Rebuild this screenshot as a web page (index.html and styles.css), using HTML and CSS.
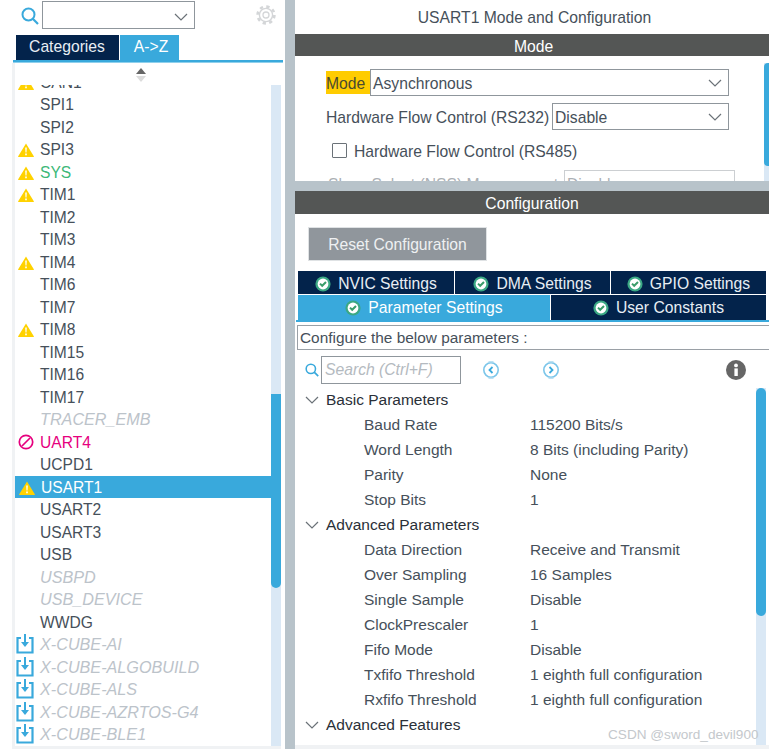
FILE: index.html
```html
<!DOCTYPE html>
<html lang="en">
<head>
<meta charset="utf-8">
<title>USART1 Mode and Configuration</title>
<link rel="stylesheet" href="styles.css">
</head>
<body>
<svg class="defs" width="0" height="0" aria-hidden="true">
  <symbol id="warn" viewBox="0 0 16 14"><path d="M8 .5 15.8 13.2a.5.5 0 0 1-.4.8H.6a.5.5 0 0 1-.4-.8Z" fill="#ffd200"/><path d="M7.2 4.5h1.6l-.3 5H7.5Z M7.2 10.6h1.6v1.6H7.2Z" fill="#fff"/></symbol>
  <symbol id="ban" viewBox="0 0 16 16"><circle cx="8" cy="8" r="6.7" fill="none" stroke="#e6007e" stroke-width="1.7"/><path d="M4 12 12 4" stroke="#e6007e" stroke-width="1.7"/></symbol>
  <symbol id="pack" viewBox="0 0 18 20"><path d="M5 4H1.5v14.5h15V4H13" fill="none" stroke="#39a9dc" stroke-width="2.2"/><path d="M9 0v10" stroke="#39a9dc" stroke-width="2"/><path d="M5 8h8l-4 5Z" fill="#39a9dc"/></symbol>
  <symbol id="ok" viewBox="0 0 16 16"><circle cx="8" cy="8" r="7.6" fill="#3ba884"/><circle cx="8" cy="8" r="5.4" fill="#fff"/><path d="M5 7.6 7.2 9.8 11 6" fill="none" stroke="#3a9d6a" stroke-width="2"/></symbol>
  <symbol id="chev" viewBox="0 0 14 8"><path d="M1 1 7 7 13 1" fill="none" stroke="#6b7278" stroke-width="1.2"/></symbol>
  <symbol id="lens" viewBox="0 0 18 18"><circle cx="7.5" cy="7.5" r="6" fill="none" stroke="#39a9dc" stroke-width="2"/><path d="M11.8 11.8 17 17" stroke="#39a9dc" stroke-width="2.2"/></symbol>
</svg>

<aside class="left">
  <div class="toolbar">
    <svg class="lens-big"><use href="#lens"/></svg>
    <div class="combo"><svg class="chev"><use href="#chev"/></svg></div>
    <svg class="gear" viewBox="0 0 20 20"><circle cx="10" cy="10" r="8.4" fill="none" stroke="#d4d6d8" stroke-width="2.6" stroke-dasharray="3.3 3.3"/><circle cx="10" cy="10" r="6.6" fill="none" stroke="#d4d6d8" stroke-width="1.4"/><circle cx="10" cy="10" r="3" fill="none" stroke="#d4d6d8" stroke-width="1.3"/></svg>
  </div>
  <div class="tabs">
    <span class="tab tab-cat">Categories</span>
    <span class="tab tab-az">A-&gt;Z</span>
  </div>
  <div class="tabline"></div>
  <div class="listpane">
    <div class="arrow-row"><svg class="updown" viewBox="0 0 12 14"><path d="M6 0 11 6H1Z" fill="#666"/><path d="M1 8H11L6 14Z" fill="#dcdcdc"/></svg></div>
    <div class="listview">
      <ul class="list">
        <li class="row"><svg class="ico-warn"><use href="#warn"/></svg>CAN1</li>
        <li class="row">SPI1</li>
        <li class="row">SPI2</li>
        <li class="row"><svg class="ico-warn"><use href="#warn"/></svg>SPI3</li>
        <li class="row green"><svg class="ico-warn"><use href="#warn"/></svg>SYS</li>
        <li class="row"><svg class="ico-warn"><use href="#warn"/></svg>TIM1</li>
        <li class="row">TIM2</li>
        <li class="row">TIM3</li>
        <li class="row"><svg class="ico-warn"><use href="#warn"/></svg>TIM4</li>
        <li class="row">TIM6</li>
        <li class="row">TIM7</li>
        <li class="row"><svg class="ico-warn"><use href="#warn"/></svg>TIM8</li>
        <li class="row">TIM15</li>
        <li class="row">TIM16</li>
        <li class="row">TIM17</li>
        <li class="row off">TRACER_EMB</li>
        <li class="row pink"><svg class="ico-ban"><use href="#ban"/></svg>UART4</li>
        <li class="row">UCPD1</li>
        <li class="row selected"><svg class="ico-warn"><use href="#warn"/></svg>USART1</li>
        <li class="row">USART2</li>
        <li class="row">USART3</li>
        <li class="row">USB</li>
        <li class="row off">USBPD</li>
        <li class="row off">USB_DEVICE</li>
        <li class="row">WWDG</li>
        <li class="row off"><svg class="ico-pack"><use href="#pack"/></svg>X-CUBE-AI</li>
        <li class="row off"><svg class="ico-pack"><use href="#pack"/></svg>X-CUBE-ALGOBUILD</li>
        <li class="row off"><svg class="ico-pack"><use href="#pack"/></svg>X-CUBE-ALS</li>
        <li class="row off"><svg class="ico-pack"><use href="#pack"/></svg>X-CUBE-AZRTOS-G4</li>
        <li class="row off"><svg class="ico-pack"><use href="#pack"/></svg>X-CUBE-BLE1</li>
      </ul>
      <div class="track track-list"><div class="thumb thumb-list"></div></div>
    </div>
  </div>
</aside>

<main class="right">
  <h1 class="title">USART1 Mode and Configuration</h1>
  <h2 class="bar bar-mode">Mode</h2>
  <section class="mode">
    <div class="form-row row-mode">
      <span class="hl">Mode</span>
      <div class="select sel-mode">Asynchronous<svg class="chev"><use href="#chev"/></svg></div>
    </div>
    <div class="form-row row-rs232">
      <span class="lbl">Hardware Flow Control (RS232)</span>
      <div class="select sel-rs232">Disable<svg class="chev"><use href="#chev"/></svg></div>
    </div>
    <label class="form-row row-rs485"><span class="check"></span><span class="lbl">Hardware Flow Control (RS485)</span></label>
    <div class="form-row row-nss">
      <span class="lbl">Slave Select (NSS) Management</span>
      <div class="select sel-nss">Disable</div>
    </div>
    <div class="mode-track"><div class="mode-thumb"></div></div>
  </section>
  <div class="gutter"></div>
  <h2 class="bar bar-config">Configuration</h2>
  <section class="config">
    <div class="reset-wrap"><button class="reset">Reset Configuration</button></div>
    <div class="ctabs ctabs-3">
      <span class="ctab"><svg class="ok"><use href="#ok"/></svg>NVIC Settings</span>
      <span class="ctab"><svg class="ok"><use href="#ok"/></svg>DMA Settings</span>
      <span class="ctab"><svg class="ok"><use href="#ok"/></svg>GPIO Settings</span>
    </div>
    <div class="ctabs ctabs-2">
      <span class="ctab active"><svg class="ok"><use href="#ok"/></svg>Parameter Settings</span>
      <span class="ctab"><svg class="ok"><use href="#ok"/></svg>User Constants</span>
    </div>
    <div class="ctabline"></div>
    <div class="hint">Configure the below parameters :</div>
    <div class="searchrow">
      <svg class="lens-small"><use href="#lens"/></svg>
      <div class="search">Search (Ctrl+F)</div>
      <svg class="nav nav-prev" viewBox="0 0 18 18"><circle cx="9" cy="9" r="7.2" fill="none" stroke="#7cc6ea" stroke-width="1.6"/><path d="M6.5 1h5M6.5 17h5" stroke="#a5d8f0" stroke-width="1.4"/><path d="M10.5 6 7.5 9l3 3" fill="none" stroke="#39a9dc" stroke-width="1.8"/></svg>
      <svg class="nav nav-next" viewBox="0 0 18 18"><circle cx="9" cy="9" r="7.2" fill="none" stroke="#7cc6ea" stroke-width="1.6"/><path d="M6.5 1h5M6.5 17h5" stroke="#a5d8f0" stroke-width="1.4"/><path d="M7.5 6l3 3-3 3" fill="none" stroke="#39a9dc" stroke-width="1.8"/></svg>
      <svg class="info" viewBox="0 0 20 20"><circle cx="10" cy="10" r="10" fill="#666"/><rect x="8.4" y="8.4" width="3.4" height="7.6" fill="#fff"/><circle cx="10" cy="5.4" r="1.9" fill="#fff"/></svg>
    </div>
    <div class="tree-wrap">
      <div class="tree">
        <div class="group"><svg class="tree-chev"><use href="#chev"/></svg>Basic Parameters</div>
        <div class="param"><span>Baud Rate</span><span>115200 Bits/s</span></div>
        <div class="param"><span>Word Length</span><span>8 Bits (including Parity)</span></div>
        <div class="param"><span>Parity</span><span>None</span></div>
        <div class="param"><span>Stop Bits</span><span>1</span></div>
        <div class="group"><svg class="tree-chev"><use href="#chev"/></svg>Advanced Parameters</div>
        <div class="param"><span>Data Direction</span><span>Receive and Transmit</span></div>
        <div class="param"><span>Over Sampling</span><span>16 Samples</span></div>
        <div class="param"><span>Single Sample</span><span>Disable</span></div>
        <div class="param"><span>ClockPrescaler</span><span>1</span></div>
        <div class="param"><span>Fifo Mode</span><span>Disable</span></div>
        <div class="param"><span>Txfifo Threshold</span><span>1 eighth full configuration</span></div>
        <div class="param"><span>Rxfifo Threshold</span><span>1 eighth full configuration</span></div>
        <div class="group"><svg class="tree-chev"><use href="#chev"/></svg>Advanced Features</div>
      </div>
      <div class="track track-tree"><div class="thumb thumb-tree"></div></div>
    </div>
    <div class="foot"></div>
  </section>
</main>
<div class="watermark">CSDN @sword_devil900</div>
</body>
</html>
```

FILE: styles.css
```css
* { box-sizing: border-box; }
html, body { margin: 0; padding: 0; }
body {
  position: relative;
  display: flex;
  width: 769px;
  height: 749px;
  overflow: hidden;
  background: #fff;
  font: 15.7px/1 "Liberation Sans", Arial, sans-serif;
  color: #46505a;
}
.defs { position: absolute; }

/* left pane */
.left { width: 285px; height: 749px; display: flex; flex-direction: column; flex: none; }
.toolbar { height: 35px; display: flex; align-items: flex-start; flex: none; }
.lens-big { width: 18px; height: 18px; margin: 7px 0 0 21px; }
.combo { position: relative; width: 153px; height: 28px; margin: 1px 0 0 3px; border: 1px solid #8f969c; background: #fff; }
.combo .chev { position: absolute; top: 11px; right: 6px; }
.chev { width: 14px; height: 8px; }
.gear { width: 20px; height: 20px; margin: 5px 0 0 61px; }
.tabs { height: 25px; display: flex; gap: 1px; padding-left: 16px; flex: none; }
.tab { display: flex; align-items: center; justify-content: center; color: #fff; padding-bottom: 1px; }
.tab-cat { width: 103px; background: #03234b; color: #e8eef4; padding-right: 1px; }
.tab-az { width: 59px; background: #39a9dc; padding-left: 3px; }
.tabline { height: 3px; margin: 0 2px 0 13px; border-top: 2px solid #39a9dc; border-bottom: 1px solid #8fd0ec; flex: none; }
.listpane { flex: 1; margin: 0 4px 0 12px; padding: 0 0 3px 3px; background: #f0f2f4; display: flex; flex-direction: column; min-height: 0; }
.arrow-row { height: 22px; background: #fff; display: flex; justify-content: center; padding: 5px 14px 0 0; flex: none; }
.updown { width: 12px; height: 14px; }
.listview { position: relative; flex: 1; overflow: hidden; background: #fff; min-height: 0; }
.list { list-style: none; margin: -14.5px 0 0; padding: 0; }
.row { position: relative; height: 22.5px; line-height: 24.5px; padding-left: 25px; font-size: 15.6px; color: #46505a; white-space: nowrap; }
.row.off { font-style: italic; font-size: 16.2px; line-height: 22.5px; color: #bcc3ca; }
.row.green { color: #3cb878; }
.row.pink { color: #e6007e; }
.row.selected { background: #39a9dc; color: #fff; padding-left: 26px; margin-right: 10px; }
.ico-warn { position: absolute; left: 3px; top: 5px; width: 16px; height: 14px; }
.selected .ico-warn { left: 4px; }
.ico-ban { position: absolute; left: 3px; top: 3px; width: 16px; height: 16px; }
.ico-pack { position: absolute; left: 1px; top: 1px; width: 18px; height: 20px; }
.track { position: absolute; top: 0; right: 0; bottom: 0; width: 10px; background: #dae8f5; }
.thumb { width: 100%; background: #39a9dc; border-radius: 0 0 5px 5px; }
.thumb-list { position: absolute; top: 309px; height: 194px; }

/* right pane */
.right { flex: 1; display: flex; flex-direction: column; margin-left: 10px; min-width: 0; height: 749px; box-shadow: -10px 0 0 #b8c3ca; background: #fff; position: relative; }
.title { margin: 0; height: 34px; font: 400 15.7px/36px "Liberation Sans", Arial, sans-serif; text-align: center; color: #46505a; padding-left: 5px; flex: none; }
.bar { margin: 0; font: 400 15.7px/1 "Liberation Sans", Arial, sans-serif; color: #fff; background: #545655; flex: none; display: flex; align-items: center; justify-content: center; }
.bar-mode { height: 22px; padding: 3px 0 0 3px; }
.bar-config { height: 23px; padding-top: 3px; }
.mode { position: relative; height: 125px; overflow: hidden; flex: none; padding: 13px 0 0 31px; }
.form-row { display: flex; align-items: center; height: 27px; color: #46505a; white-space: nowrap; }
.lbl { padding-top: 2px; }
.hl { background: #ffcc00; height: 23px; width: 44px; display: flex; align-items: center; color: #4a4a30; padding-top: 2px; }
.select { position: relative; height: 27px; border: 1px solid #8f969c; background: #fff; display: flex; align-items: center; padding: 2px 0 0 2px; color: #46505a; }
.select .chev { position: absolute; top: 9px; right: 6px; }
.sel-mode { width: 359px; }
.row-rs232 { margin-top: 7px; }
.row-rs232 .lbl { width: 226px; }
.sel-rs232 { width: 177px; }
.row-rs485 { margin: 7px 0 0 6px; }
.check { width: 15px; height: 15px; border: 1px solid #6b7278; margin-right: 7px; border-radius: 1px; }
.row-nss { margin-top: 6px; opacity: .45; }
.row-nss .lbl { width: 236px; margin-left: 2px; }
.sel-nss { width: 171px; }
.mode-track { position: absolute; right: 0; top: 7px; bottom: 0; width: 5px; background: #dae8f5; }
.mode-thumb { height: 103px; background: #39a9dc; border-radius: 4px 0 0 4px; }
.gutter { height: 10px; background: #b8c3ca; flex: none; }
.config { flex: 1; display: flex; flex-direction: column; min-height: 0; }
.reset-wrap { padding: 13px 0 0 13px; height: 57px; flex: none; }
.reset { width: 179px; height: 34px; border: 1px solid #dfe2e4; background: #90969c; color: #eef0f2; font: 15.7px "Liberation Sans", Arial, sans-serif; padding: 1px 0 0; display: block; }
.ctabs { display: flex; gap: 1px; margin: 0 3px; flex: none; }
.ctabs-3 { height: 23px; margin-bottom: 1px; }
.ctabs-2 { height: 25px; }
.ctab { display: flex; align-items: center; justify-content: center; flex: 1; background: #03234b; color: #e8eef4; padding-top: 1px; }
.ctabs-3 .ctab { padding-top: 3px; }
.ctabs-3 .ctab:first-child { flex: 0 0 156px; }
.ctabs-2 .ctab { flex: 215; }
.ctabs-2 .ctab.active { flex: 252; background: #39a9dc; color: #fff; }
.ok { width: 16px; height: 16px; margin-right: 7px; }
.ctabline { height: 2px; margin-left: 1px; background: #39a9dc; flex: none; }
.hint { height: 25px; margin: 3px 0 0 2px; border: 1px solid #9aa0a6; border-right: 0; padding: 1px 0 0 2px; display: flex; align-items: center; font-size: 15.4px; color: #46505a; flex: none; }
.searchrow { height: 35px; display: flex; align-items: center; flex: none; padding-top: 5px; }
.lens-small { width: 14px; height: 14px; margin: 0 2px 0 10px; }
.search { width: 140px; height: 28px; border: 1px solid #8f969c; display: flex; align-items: center; padding-left: 3px; font-style: italic; color: #b4bac0; }
.nav { width: 18px; height: 18px; }
.nav-prev { margin-left: 21px; }
.nav-next { margin-left: 42px; }
.info { width: 20px; height: 20px; margin-left: 166px; }
.tree-wrap { position: relative; flex: 1; min-height: 0; overflow: hidden; padding-top: 2px; font-size: 15.5px; }
.group { position: relative; height: 25px; display: flex; align-items: center; padding-left: 31px; color: #2a3038; }
.tree-chev { position: absolute; left: 10px; top: 9px; width: 14px; height: 8px; }
.param { height: 25px; display: flex; align-items: center; padding-left: 69px; color: #46505a; }
.param span:first-child { width: 166px; }
.track-tree { top: 3px; right: 3px; bottom: 0; }
.thumb-tree { height: 228px; border-radius: 5px; }
.foot { height: 4px; background: #f0f2f4; flex: none; }
.watermark { position: absolute; left: 608px; top: 728px; font-size: 13.6px; color: #c4c8cc; white-space: nowrap; }
```
